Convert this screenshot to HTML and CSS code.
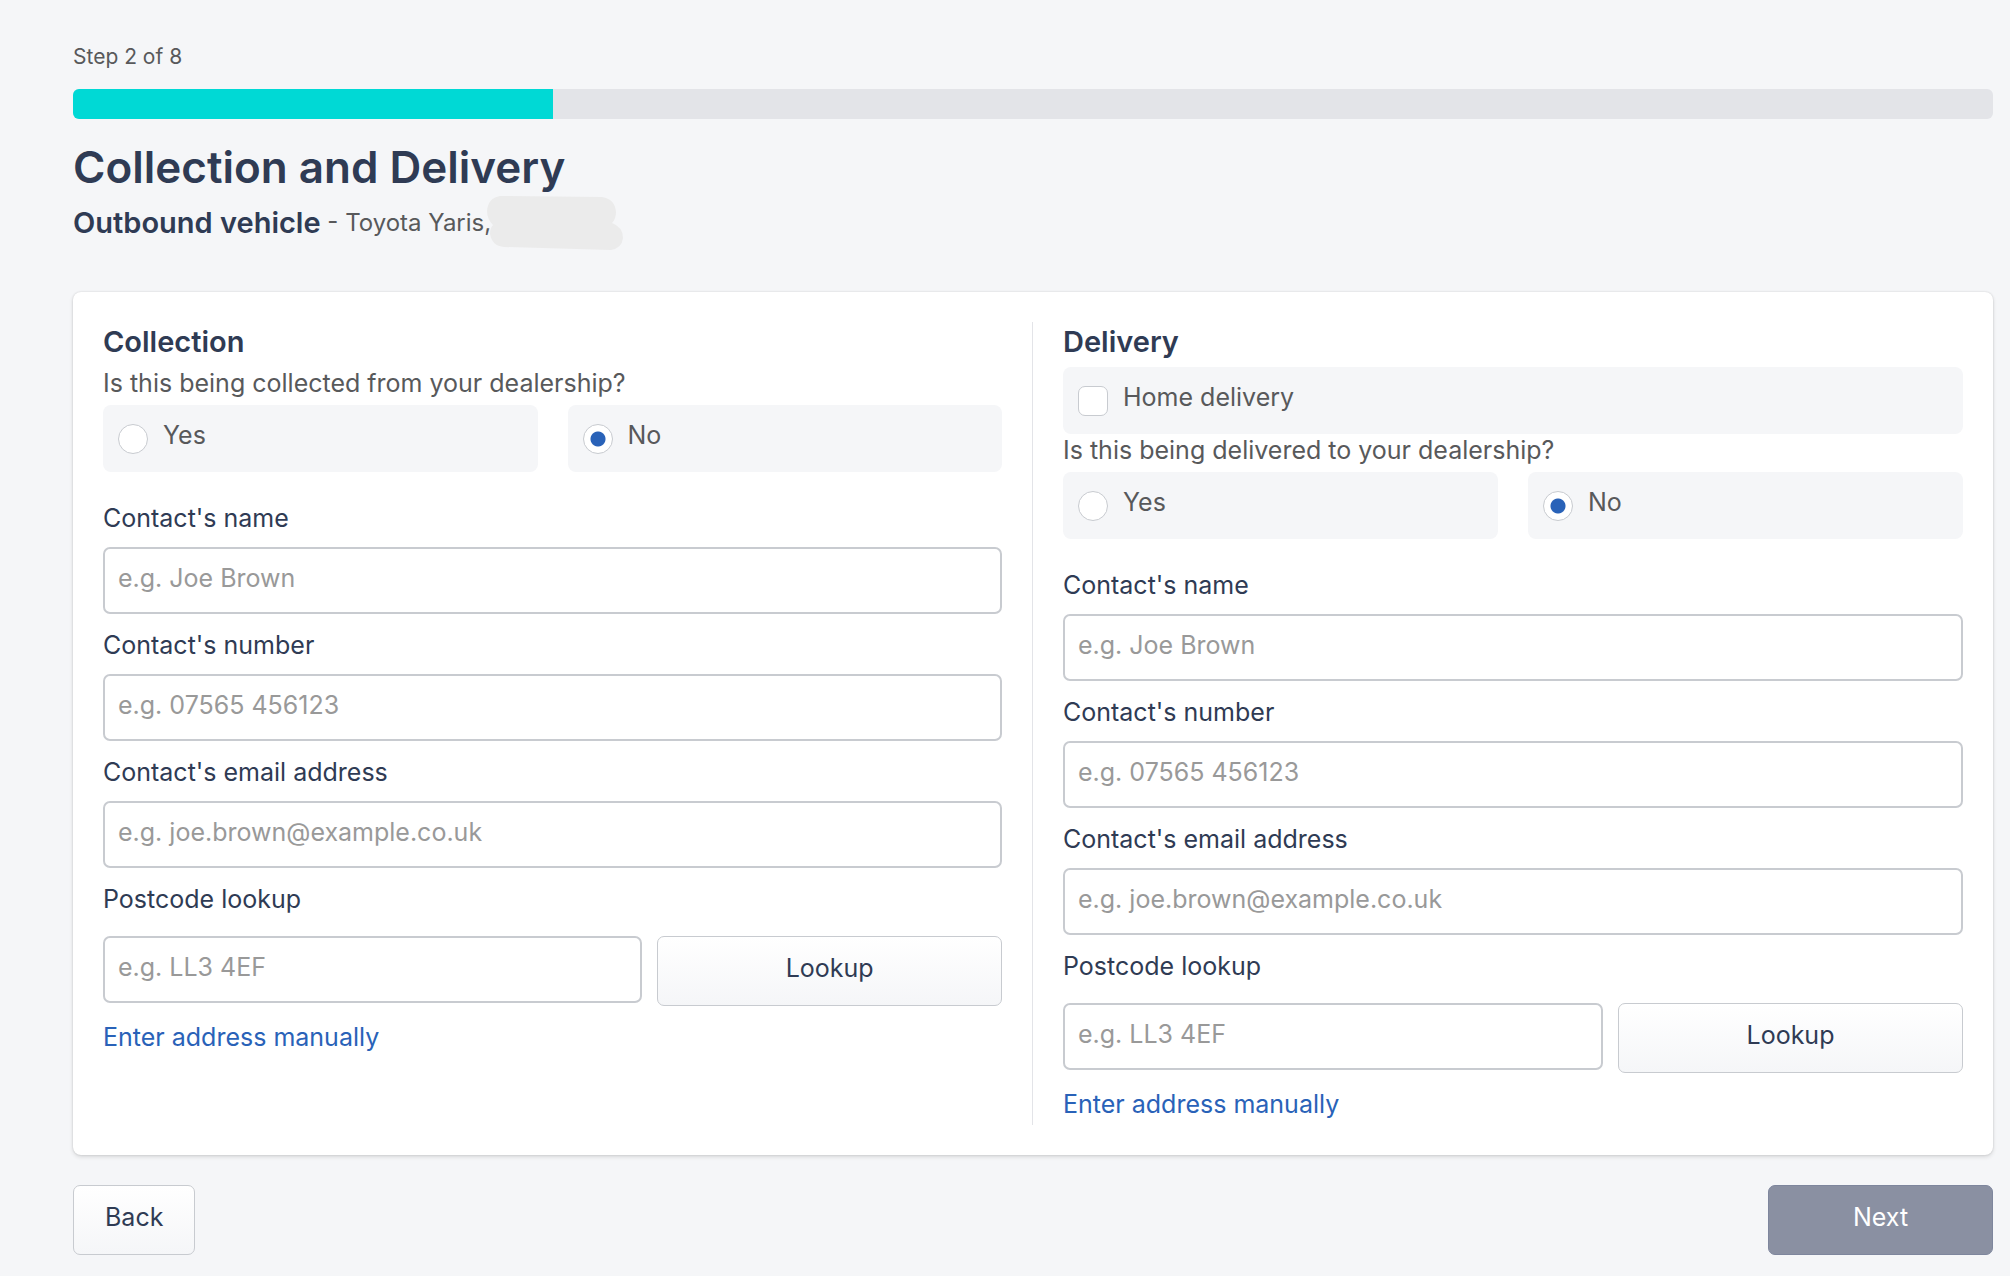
FILE: index.html
```html
<!DOCTYPE html>
<html lang="en">
<head>
  <meta charset="UTF-8" />
  <meta name="viewport" content="width=device-width, initial-scale=1" />
  <title>Collection and Delivery</title>
  <link rel="stylesheet" href="styles.css">
</head>
<body>
  <main class="page">
    <label class="step" for="progress">Step 2 of 8</label>
    <progress id="progress" class="progress" value="2" max="8"></progress>

    <h1>Collection and Delivery</h1>
    <p class="vehicle">
      <strong>Outbound vehicle</strong> - Toyota Yaris,<svg class="redacted" width="136" height="54" viewBox="0 0 136 54" aria-hidden="true"><path d="M13 0 L115 1 Q128 3 129 16 Q129 23 125 27 Q136 31 136 42 Q135 52 124 54 L17 51 Q5 50 3 38 Q3 32 6 29 Q0 23 0 15 Q1 2 13 0 Z" fill="#ebebeb"/></svg>
    </p>

    <form id="transport">
      <div class="card">
        <section class="column">
          <h2>Collection</h2>
          <fieldset>
            <legend>Is this being collected from your dealership?</legend>
            <div class="choices">
              <label class="choice"><input type="radio" name="collected" value="yes"><span>Yes</span></label>
              <label class="choice"><input type="radio" name="collected" value="no" checked><span>No</span></label>
            </div>
          </fieldset>

          <div class="field">
            <label for="c-name">Contact's name</label>
            <input type="text" id="c-name" placeholder="e.g. Joe Brown">
          </div>
          <div class="field">
            <label for="c-number">Contact's number</label>
            <input type="tel" id="c-number" placeholder="e.g. 07565 456123">
          </div>
          <div class="field">
            <label for="c-email">Contact's email address</label>
            <input type="email" id="c-email" placeholder="e.g. joe.brown@example.co.uk">
          </div>
          <div class="field postcode">
            <label for="c-postcode">Postcode lookup</label>
            <div class="lookup">
              <input type="text" id="c-postcode" placeholder="e.g. LL3 4EF">
              <button type="button" class="btn">Lookup</button>
            </div>
          </div>
          <a class="manual" href="#">Enter address manually</a>
        </section>

        <section class="column">
          <h2>Delivery</h2>
          <label class="choice"><input type="checkbox" name="home"><span>Home delivery</span></label>
          <fieldset>
            <legend>Is this being delivered to your dealership?</legend>
            <div class="choices">
              <label class="choice"><input type="radio" name="delivered" value="yes"><span>Yes</span></label>
              <label class="choice"><input type="radio" name="delivered" value="no" checked><span>No</span></label>
            </div>
          </fieldset>

          <div class="field">
            <label for="d-name">Contact's name</label>
            <input type="text" id="d-name" placeholder="e.g. Joe Brown">
          </div>
          <div class="field">
            <label for="d-number">Contact's number</label>
            <input type="tel" id="d-number" placeholder="e.g. 07565 456123">
          </div>
          <div class="field">
            <label for="d-email">Contact's email address</label>
            <input type="email" id="d-email" placeholder="e.g. joe.brown@example.co.uk">
          </div>
          <div class="field postcode">
            <label for="d-postcode">Postcode lookup</label>
            <div class="lookup">
              <input type="text" id="d-postcode" placeholder="e.g. LL3 4EF">
              <button type="button" class="btn">Lookup</button>
            </div>
          </div>
          <a class="manual" href="#">Enter address manually</a>
        </section>
      </div>

      <div class="actions">
        <button type="button" class="btn">Back</button>
        <button type="submit" class="btn btn-next">Next</button>
      </div>
    </form>
  </main>
</body>
</html>
```
FILE: styles.css
```css
* {
  box-sizing: border-box;
}

body {
  margin: 0;
  background: #f5f6f8;
  color: #58595b;
  font-family: Inter, "Liberation Sans", sans-serif;
  font-size: 25px;
  line-height: 38px;
}

.page {
  padding: 41px 17px 16px 73px;
}

.step {
  display: block;
  font-size: 21px;
  line-height: 32px;
}

.progress {
  display: block;
  appearance: none;
  width: 100%;
  height: 30px;
  margin-top: 16px;
  border: none;
  border-radius: 6px;
  overflow: hidden;
  background: #e3e4e8;
}

.progress::-webkit-progress-bar {
  background: #e3e4e8;
}

.progress::-webkit-progress-value {
  background: #00d9d5;
}

h1, h2, strong {
  color: #2f3b54;
  font-weight: 600;
}

h1 {
  margin: 20px 0 0;
  font-size: 44px;
  line-height: 57px;
}

.vehicle {
  display: flex;
  align-items: center;
  height: 54px;
  margin: 0;
  font-size: 24px;
  white-space: pre;
}

.vehicle strong, h2 {
  font-size: 29px;
}

.redacted {
  margin-left: -4px;
}

.card {
  display: grid;
  grid-template-columns: 1fr 1fr;
  margin-top: 42px;
  padding: 30px 0;
  background: #fff;
  border-radius: 8px;
  box-shadow: 0 0 2px rgba(0, 0, 0, 0.15), 0 2px 4px rgba(0, 0, 0, 0.12);
}

.column {
  padding: 0 30px;
}

.column:first-child {
  border-right: 1px solid #e3e4e8;
}

h2 {
  margin: 0;
  padding-bottom: 6px;
  line-height: 39px;
}

fieldset {
  margin: 0;
  padding: 0;
  border: none;
}

legend {
  padding: 0 0 6px;
  line-height: 32px;
}

.choices {
  display: grid;
  grid-template-columns: 1fr 1fr;
  gap: 30px;
}

.choice {
  display: flex;
  align-items: center;
  gap: 15px;
  height: 67px;
  padding: 0 15px;
  background: #f5f6f8;
  border-radius: 8px;
}

.choice span {
  padding-bottom: 7px;
}

.choice input {
  appearance: none;
  width: 30px;
  height: 30px;
  margin: 0;
  background: #fff;
  border: 1px solid #c8cbd0;
  border-radius: 7px;
}

.choice input[type="radio"] {
  border-radius: 50%;
}

.choice input[type="radio"]:checked {
  background: radial-gradient(circle, #2962b8 7px, #fff 8px);
}

.field {
  padding-top: 15px;
}

fieldset + .field {
  padding-top: 30px;
}

.field label {
  display: block;
  padding-bottom: 13px;
  line-height: 32px;
}

.postcode label {
  padding-bottom: 21px;
}

.field label, .btn {
  color: #2f3b54;
}

.field input {
  display: block;
  width: 100%;
  height: 67px;
  padding: 0 13px 6px;
  font: inherit;
  color: #2f3b54;
  background: #fff;
  border: 2px solid #c8cbd0;
  border-radius: 7px;
}

.field input::placeholder {
  color: #999;
}

.lookup {
  display: grid;
  grid-template-columns: 60% 1fr;
  align-items: start;
  gap: 15px;
}

.btn {
  height: 70px;
  padding: 0 31px 6px;
  font: inherit;
  background: linear-gradient(#fff, #f5f6f8);
  border: 1px solid #c8cbd0;
  border-radius: 7px;
  cursor: pointer;
}

.btn-next {
  width: 225px;
  color: #fff;
  background: #8a90a2;
  border-color: #7e869d;
}

.manual {
  display: block;
  width: fit-content;
  margin-top: 12px;
  padding-bottom: 2px;
  color: #2962b8;
  text-decoration: none;
}

.actions {
  display: flex;
  justify-content: space-between;
  margin-top: 30px;
}

@media (max-width: 900px) {
  .card {
    grid-template-columns: 1fr;
    gap: 30px;
  }

  .column:first-child {
    border-right: none;
  }
}
```
